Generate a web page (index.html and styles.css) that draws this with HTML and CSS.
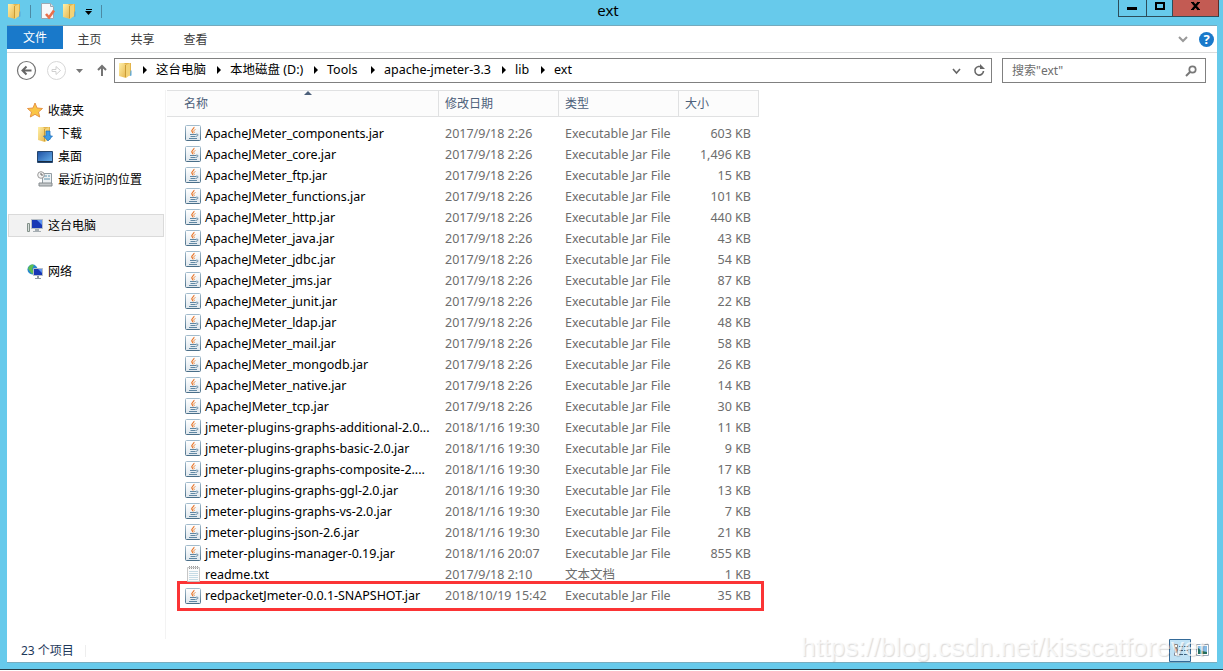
FILE: index.html
```html
<!DOCTYPE html>
<html lang="zh-CN">
<head>
  <meta charset="UTF-8">
  <title>ext</title>
  <link rel="stylesheet" href="styles.css">
</head>
<body>
  <svg class="defs" width="0" height="0">
    <linearGradient id="gold" x2="1" y2="1">
      <stop offset="0" stop-color="#fff0a8"/><stop offset="1" stop-color="#e6b54c"/>
    </linearGradient>
    <linearGradient id="screen" x2="1" y2="1">
      <stop offset="0" stop-color="#1e50a2"/><stop offset="1" stop-color="#69b4ef"/>
    </linearGradient>
    <linearGradient id="steel" x2="0" y2="1">
      <stop offset="0" stop-color="#a3bccd"/><stop offset="1" stop-color="#4a6f89"/>
    </linearGradient>
    <linearGradient id="paper" x2="0" y2="1">
      <stop offset="0" stop-color="#ffffff"/><stop offset="1" stop-color="#dfe7ed"/>
    </linearGradient>
    <symbol id="folder" viewBox="0 0 16 16">
      <path d="M6 1h7v12l-6 2z" fill="#e3b44b"/>
      <path d="M1 1h5l2 2v13l-7-2z" fill="url(#gold)"/>
      <path d="M8 3l4-2v12l-4 3z" fill="#f3d377"/>
      <path d="M7.500 3v12" stroke="#c99b36"/>
      <path d="M12.500 8.500h1v5l-1.500.500z" fill="#58a8dc"/>
    </symbol>
    <symbol id="jar" viewBox="0 0 16 16">
      <rect x=".5" y=".5" width="15" height="15" rx="1" fill="url(#paper)" stroke="url(#steel)"/>
      <path d="M9 2c.5 1.800-3.500 2.700-2 4.500.4.500.8.800.7 1.700" fill="none" stroke="#e8752a" stroke-width="1.200"/>
      <path d="M10.500 4.500c-2.200 1-2.200 1.700-1.400 2.400.5.500.2 1-.4 1.400" fill="none" stroke="#ee944f"/>
      <path d="M5 9.500h6M5.500 11.500h5M4 13.500h8" fill="none" stroke="#5f87a3"/>
      <path d="M11 9.300c2.600-.7 2.800 1.600-.2 2.100" fill="none" stroke="#5f87a3"/>
    </symbol>
    <symbol id="txt" viewBox="0 0 16 16">
      <path d="M2.500 1.500h12v14h-12z" fill="#fbfbfb" stroke="#c6c6c6"/>
      <path d="M4 5.500h9M4 7.500h9M4 9.500h9M4 11.500h9M4 13.500h9" stroke="#c5dbe5"/>
      <path d="M4.500 0v3M6.500 0v3M8.500 0v3M10.500 0v3M12.500 0v3" stroke="#999" stroke-dasharray="1"/>
    </symbol>
  </svg>

  <div class="window">
    <header class="titlebar">
      <div class="quick">
        <svg width="16" height="18"><use href="#folder"/></svg>
        <i class="bar"></i>
        <svg width="16" height="18" viewBox="0 0 16 18">
          <path d="M1.500 1.500h9l3 3v12h-12z" fill="#f7f8fa" stroke="#9aa9b4"/>
          <path d="M10.500 1.500v3h3" fill="#dce6ee" stroke="#9aa9b4"/>
          <path d="M6 12l3 3.500 5-7" fill="none" stroke="#e9704a" stroke-width="2.600"/>
        </svg>
        <svg class="second" width="16" height="18"><use href="#folder"/></svg>
        <svg class="menu-arrow" width="8" height="6"><path d="M1 .500h6" stroke="#000"/><path d="M0 2h7L3.500 6z"/></svg>
        <i class="bar"></i>
      </div>
      <h1>ext</h1>
      <div class="controls">
        <span><svg width="27" height="16"><path d="M8 7h10v3H8z"/></svg></span>
        <span><svg width="25" height="16"><path d="M9 3h8v6H9z" fill="none" stroke="#000" stroke-width="2"/></svg></span>
        <span class="close"><svg width="45" height="16"><path d="M19.500 2.500l6 7M25.500 2.500l-6 7" stroke="#000" stroke-width="2.300"/><path d="M18 2.500h3M24 2.500h3M18 9.500h3M24 9.500h3" stroke="#000"/></svg></span>
      </div>
    </header>

    <div class="frame">
      <nav class="tabs">
        <a class="file">文件</a><a>主页</a><a>共享</a><a>查看</a>
        <div class="help">
          <svg width="10" height="7"><path d="M1 1l4 4 4-4" fill="none" stroke="#999" stroke-width="2"/></svg>
          <span>?</span>
        </div>
      </nav>

      <div class="toolbar">
        <svg class="nav-buttons" width="96" height="24" viewBox="0 0 96 24" fill="none">
          <circle cx="10.500" cy="12.500" r="9" stroke="#737373" stroke-width="1.200"/>
          <path d="M15.500 12.500H6.500M10.500 8.500l-4 4 4 4" stroke="#666" stroke-width="2"/>
          <circle cx="40.500" cy="12.500" r="9" stroke="#d7d7d7"/>
          <path d="M36 11.500h4v-3l4.500 4-4.500 4v-3h-4z" stroke="#d0d0d0"/>
          <path d="M60 11h7l-3.500 4z" fill="#777"/>
          <path d="M86 18V8M82 12l4-4 4 4" stroke="#747474" stroke-width="2"/>
        </svg>
        <div class="address">
          <svg class="crumb-icon" width="16" height="18"><use href="#folder"/></svg>
          <i class="arrow"></i><span class="c1">这台电脑</span>
          <i class="arrow"></i><span class="c2">本地磁盘 (D:)</span>
          <i class="arrow"></i><span class="c3">Tools</span>
          <i class="arrow"></i><span class="c4">apache-jmeter-3.3</span>
          <i class="arrow"></i><span class="c5">lib</span>
          <i class="arrow"></i><span>ext</span>
          <svg class="reload" width="36" height="14" viewBox="0 0 36 14" fill="none" stroke="#666">
            <path d="M1 5l3.500 4L8 5" stroke-width="1.600"/>
            <path d="M30 3.500a4.300 4.300 0 1 0 1.500 3.500" stroke-width="1.600"/>
            <path d="M28 0v5h5z" fill="#666" stroke="none"/>
          </svg>
        </div>
        <div class="search">
          <span>搜索"ext"</span>
          <svg width="12" height="12" fill="none" stroke="#777"><circle cx="7.500" cy="4.500" r="3.200" stroke-width="1.700"/><path d="M5 7l-4 4" stroke-width="2"/></svg>
        </div>
      </div>

      <div class="content">
        <aside class="sidebar">
          <div class="node top">
            <svg width="16" height="18"><path d="M8 1l2 5 5.500.500-4 3.500 1.200 5L8 12.300 3.300 15l1.200-5-4-3.500L6 6z" fill="#fac545" stroke="#e69445"/></svg>
            <span>收藏夹</span>
          </div>
          <div class="node">
            <svg width="16" height="18"><use href="#folder"/><path d="M9 6h4v5h2.500L11 16l-4.500-5H9z" fill="#3e9be6" stroke="#1e6fbc" stroke-width=".700"/></svg>
            <span>下载</span>
          </div>
          <div class="node">
            <svg width="16" height="16"><path d="M.500 2.500h15v11H.500z" fill="url(#screen)" stroke="#25466e"/><path d="M1 12.500h14" stroke="#172a42"/></svg>
            <span>桌面</span>
          </div>
          <div class="node">
            <svg width="16" height="18"><path d="M5.500 2.500h9v10h-9z" fill="#edf1f3" stroke="#929da3"/><path d="M7 5h3M11 5h2M7 8h6" stroke="#5c91ac"/><path d="M2 12h13v3H2z" fill="#c4c8ca" stroke="#858b8e"/><circle cx="4" cy="4" r="3.300" fill="#f4f4f4" stroke="#9a9a9a"/><path d="M4 2v2h2" fill="none" stroke="#666"/></svg>
            <span>最近访问的位置</span>
          </div>
          <div class="node top selected">
            <svg width="16" height="16"><path d="M.500 5.500h2v8h-2z" fill="#d6dedb" stroke="#829089"/><path d="M4.500 1.500h11v9h-11z" fill="#1737b5" stroke="#b6bec6"/><path d="M10 2h5v5z" fill="#5e94f1"/><path d="M8 11h4v2h2v1H6v-1h2z" fill="#a6aeb3"/></svg>
            <span>这台电脑</span>
          </div>
          <div class="node top network">
            <svg width="16" height="16"><circle cx="5.500" cy="5.500" r="5" fill="#2587cd"/><path d="M1 4c2-4 5-4 6-3L5 5l2 3-2 2C3 7 2 7 1 4z" fill="#5ebf50"/><path d="M6.500 4.500h9v7h-9z" fill="#1737b5" stroke="#b6bec6"/><path d="M11 5h4v4z" fill="#5e94f1"/><path d="M10 12h2v2h2v1H8v-1h2z" fill="#8f999e"/></svg>
            <span>网络</span>
          </div>
        </aside>

        <main class="files">
          <div class="columns">
            <span class="sorted">名称</span><span>修改日期</span><span>类型</span><span>大小</span>
          </div>
          <div class="row"><svg><use href="#jar"/></svg><b>ApacheJMeter_components.jar</b><span>2017/9/18 2:26</span><span>Executable Jar File</span><em>603 KB</em></div>
          <div class="row"><svg><use href="#jar"/></svg><b>ApacheJMeter_core.jar</b><span>2017/9/18 2:26</span><span>Executable Jar File</span><em>1,496 KB</em></div>
          <div class="row"><svg><use href="#jar"/></svg><b>ApacheJMeter_ftp.jar</b><span>2017/9/18 2:26</span><span>Executable Jar File</span><em>15 KB</em></div>
          <div class="row"><svg><use href="#jar"/></svg><b>ApacheJMeter_functions.jar</b><span>2017/9/18 2:26</span><span>Executable Jar File</span><em>101 KB</em></div>
          <div class="row"><svg><use href="#jar"/></svg><b>ApacheJMeter_http.jar</b><span>2017/9/18 2:26</span><span>Executable Jar File</span><em>440 KB</em></div>
          <div class="row"><svg><use href="#jar"/></svg><b>ApacheJMeter_java.jar</b><span>2017/9/18 2:26</span><span>Executable Jar File</span><em>43 KB</em></div>
          <div class="row"><svg><use href="#jar"/></svg><b>ApacheJMeter_jdbc.jar</b><span>2017/9/18 2:26</span><span>Executable Jar File</span><em>54 KB</em></div>
          <div class="row"><svg><use href="#jar"/></svg><b>ApacheJMeter_jms.jar</b><span>2017/9/18 2:26</span><span>Executable Jar File</span><em>87 KB</em></div>
          <div class="row"><svg><use href="#jar"/></svg><b>ApacheJMeter_junit.jar</b><span>2017/9/18 2:26</span><span>Executable Jar File</span><em>22 KB</em></div>
          <div class="row"><svg><use href="#jar"/></svg><b>ApacheJMeter_ldap.jar</b><span>2017/9/18 2:26</span><span>Executable Jar File</span><em>48 KB</em></div>
          <div class="row"><svg><use href="#jar"/></svg><b>ApacheJMeter_mail.jar</b><span>2017/9/18 2:26</span><span>Executable Jar File</span><em>58 KB</em></div>
          <div class="row"><svg><use href="#jar"/></svg><b>ApacheJMeter_mongodb.jar</b><span>2017/9/18 2:26</span><span>Executable Jar File</span><em>26 KB</em></div>
          <div class="row"><svg><use href="#jar"/></svg><b>ApacheJMeter_native.jar</b><span>2017/9/18 2:26</span><span>Executable Jar File</span><em>14 KB</em></div>
          <div class="row"><svg><use href="#jar"/></svg><b>ApacheJMeter_tcp.jar</b><span>2017/9/18 2:26</span><span>Executable Jar File</span><em>30 KB</em></div>
          <div class="row"><svg><use href="#jar"/></svg><b>jmeter-plugins-graphs-additional-2.0...</b><span>2018/1/16 19:30</span><span>Executable Jar File</span><em>11 KB</em></div>
          <div class="row"><svg><use href="#jar"/></svg><b>jmeter-plugins-graphs-basic-2.0.jar</b><span>2018/1/16 19:30</span><span>Executable Jar File</span><em>9 KB</em></div>
          <div class="row"><svg><use href="#jar"/></svg><b>jmeter-plugins-graphs-composite-2....</b><span>2018/1/16 19:30</span><span>Executable Jar File</span><em>17 KB</em></div>
          <div class="row"><svg><use href="#jar"/></svg><b>jmeter-plugins-graphs-ggl-2.0.jar</b><span>2018/1/16 19:30</span><span>Executable Jar File</span><em>13 KB</em></div>
          <div class="row"><svg><use href="#jar"/></svg><b>jmeter-plugins-graphs-vs-2.0.jar</b><span>2018/1/16 19:30</span><span>Executable Jar File</span><em>7 KB</em></div>
          <div class="row"><svg><use href="#jar"/></svg><b>jmeter-plugins-json-2.6.jar</b><span>2018/1/16 19:30</span><span>Executable Jar File</span><em>21 KB</em></div>
          <div class="row"><svg><use href="#jar"/></svg><b>jmeter-plugins-manager-0.19.jar</b><span>2018/1/16 20:07</span><span>Executable Jar File</span><em>855 KB</em></div>
          <div class="row"><svg><use href="#txt"/></svg><b>readme.txt</b><span>2017/9/18 2:10</span><span>文本文档</span><em>1 KB</em></div>
          <div class="row marked"><svg><use href="#jar"/></svg><b>redpacketJmeter-0.0.1-SNAPSHOT.jar</b><span>2018/10/19 15:42</span><span>Executable Jar File</span><em>35 KB</em></div>
        </main>
      </div>

      <footer class="status">
        <span>23 个项目</span>
        <svg width="48" height="23" viewBox="0 0 48 23">
          <path d="M.500.500h21v22H.500z" fill="#c0e2f5" stroke="#346a98"/>
          <path d="M5.500 5.500h3v3h-3zM5.500 9.500h3v3h-3zM5.500 13.500h3v3h-3z" fill="#fff" stroke="#888"/>
          <path d="M6 11h2" stroke="#c22"/>
          <path d="M10 7.500h4M15 7.500h4M10 11.500h4M15 11.500h4M10 15.500h4M15 15.500h4" stroke="#40617b"/>
          <path d="M27.500 5.500h12v11h-12z" fill="#fff" stroke="#9ab"/>
          <path d="M29 7h9v8h-9z" fill="#86bde7"/><path d="M29 9l4 3 5 1v2h-9z" fill="#23705d"/>
        </svg>
      </footer>
    </div>
  </div>
  <div class="watermark">https://blog.csdn.net/kisscatforever</div>
</body>
</html>
```

FILE: styles.css
```css
* {
  box-sizing: border-box;
}

body {
  margin: 0;
  width: 1223px;
  height: 671px;
  overflow: hidden;
  background: #fff;
  color: #000;
  font: 12px/20px "Noto Sans", "Noto Sans CJK SC", sans-serif;
}

svg {
  display: block;
  flex: none;
}

.defs {
  position: absolute;
}

.window {
  height: 670px;
  padding: 0 6px 7px 7px;
  background: #67caeb;
  border-bottom: 1px solid #253c46;
}

.titlebar {
  display: grid;
  grid-template-columns: 586px 30px 1fr;
  height: 25px;
}

.titlebar h1 {
  margin: 0;
  font-size: 15px;
  font-weight: normal;
  line-height: 21px;
  text-align: center;
}

.quick {
  display: flex;
  align-items: center;
  height: 22px;
}

.bar {
  width: 1px;
  height: 13px;
  margin: 0 9px 0 7px;
  background: #4c8aa4;
}

.second {
  margin-left: 6px;
}

.menu-arrow {
  margin: 2px 1px 0 7px;
}

.controls {
  display: flex;
  justify-content: flex-end;
  height: 17px;
  margin-right: -2px;
}

.controls span {
  border: 1px solid #2c4d5a;
  border-top: 0;
  border-right: 0;
}

.controls .close {
  background: #c35b53;
  border-right: 1px solid #592e2b;
}

.frame {
  display: flex;
  flex-direction: column;
  height: 638px;
  background: #fff;
  border-top: 1px solid #75aabd;
  border-bottom: 1px solid #78adbf;
}

.tabs {
  display: flex;
  height: 27px;
  border-bottom: 1px solid #dadbdc;
  color: #3b3b3b;
}

.tabs a {
  width: 53px;
  height: 23px;
  line-height: 27px;
  text-align: center;
}

.tabs .file {
  width: 56px;
  line-height: 24px;
  background: #1979ca;
  color: #fff;
}

.help {
  display: flex;
  align-items: center;
  gap: 11px;
  margin-left: auto;
  padding-right: 3px;
}

.help span {
  width: 15px;
  height: 15px;
  border-radius: 50%;
  background: #1979ca;
  color: #fff;
  font-size: 13px;
  font-weight: bold;
  line-height: 15px;
  text-align: center;
}

.toolbar {
  display: flex;
  height: 37px;
  padding: 5px 11px 0 9px;
}

.nav-buttons {
  margin-right: 2px;
}

.address,
.search {
  display: flex;
  align-items: center;
  height: 25px;
  border: 1px solid #808080;
}

.address {
  width: 878px;
  padding: 0 0 1px 3px;
  font-size: 12.500px;
}

.search {
  width: 204px;
  margin-left: 10px;
  padding: 0 8px 0 9px;
  justify-content: space-between;
  color: #6d6d6d;
}

.arrow {
  width: 4px;
  margin: 0 9px 0 8px;
  border: 4px solid transparent;
  border-left-color: #000;
  border-right: 0;
}

.c1 { width: 53px; }
.c2 { width: 76px; }
.c3 { width: 36px; }
.c4 { width: 110px; }
.c5 { width: 18px; }

.address span {
  white-space: nowrap;
}

.crumb-icon {
  margin-right: 1px;
}

.reload {
  margin: 1px 3px 0 auto;
}

.content {
  display: flex;
  flex: 1;
}

.sidebar {
  width: 159px;
  padding-top: 9px;
  border-right: 1px solid #f3f3f3;
}

.node {
  display: flex;
  align-items: center;
  height: 23px;
  padding-left: 30px;
  white-space: nowrap;
}

.node span {
  margin-left: 5px;
}

.node.top {
  padding-left: 20px;
}

.node.selected {
  width: 156px;
  margin: 23px 0 0 1px;
  padding-left: 18px;
  background: #f2f2f2;
  border: 1px solid #dadada;
}

.node.network {
  margin-top: 23px;
}

.columns,
.row {
  display: grid;
  grid-template-columns: 272px 120px 120px 80px;
}

.columns {
  width: 592px;
  height: 27px;
  margin: 0 0 6px 1px;
  background: #fcfcfc;
  border-top: 1px solid #e0e1e2;
  border-bottom: 1px solid #e0e1e2;
  color: #4c607a;
  line-height: 26px;
}

.columns span {
  padding-left: 6px;
  border-right: 1px solid #e0e1e2;
}

.columns .sorted {
  position: relative;
  padding-left: 17px;
}

.sorted::after {
  content: "";
  position: absolute;
  left: 137px;
  top: 0;
  border: 4px solid transparent;
  border-top: 0;
  border-bottom-color: #4c607a;
}

.row {
  grid-template-columns: 20px 240px 120px 120px 66px;
  align-items: center;
  height: 21px;
  padding-left: 19px;
  color: #6d6d6d;
  font-size: 12.500px;
  white-space: nowrap;
}

.row svg {
  width: 16px;
  height: 16px;
  margin-bottom: 1px;
}

.row b {
  color: #000;
  font-weight: normal;
  letter-spacing: -.03px;
}

.row em {
  font-style: normal;
  text-align: right;
}

/* red frame round the plugin jar */
.marked {
  width: 587px;
  height: 30px;
  margin: -4px 0 0 11px;
  padding-left: 5px;
  border: 3px solid #fb3435;
}

.status {
  display: flex;
  justify-content: space-between;
  height: 23px;
  padding-left: 14px;
  color: #1e395b;
  line-height: 22px;
}

.status span {
  width: 65px;
  height: 12px;
  margin-top: 6px;
  border-right: 1px solid #eee;
  line-height: 12px;
}

.watermark {
  position: absolute;
  left: 801px;
  top: 632px;
  color: rgba(255, 255, 255, .7);
  font: 26.400px/30px "Liberation Sans", sans-serif;
  text-shadow: 1px 1px 1px rgba(0, 0, 0, .14);
  white-space: nowrap;
}
```
